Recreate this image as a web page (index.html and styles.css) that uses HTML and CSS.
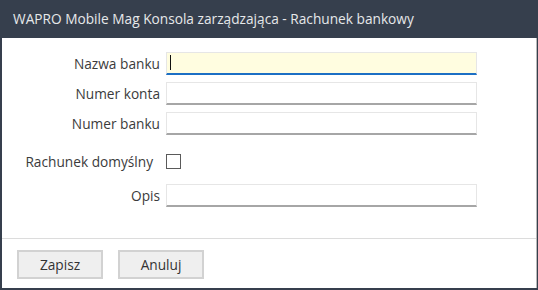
FILE: index.html
```html
<!DOCTYPE html>
<html lang="pl">
<head>
<meta charset="utf-8">
<title>Rachunek bankowy</title>
<link rel="stylesheet" href="styles.css">
</head>
<body>
<div class="window">
  <div class="titlebar">WAPRO Mobile Mag Konsola zarządzająca - Rachunek bankowy</div>
  <div class="content">
    <div class="form">
      <div class="row">
        <label class="label">Nazwa banku</label>
        <div class="field focused"><span class="caret"></span></div>
      </div>
      <div class="row">
        <label class="label">Numer konta</label>
        <div class="field"></div>
      </div>
      <div class="row">
        <label class="label">Numer banku</label>
        <div class="field"></div>
      </div>
      <div class="row row-check">
        <label class="label label-check">Rachunek domyślny</label>
        <div class="checkbox"></div>
      </div>
      <div class="row row-opis">
        <label class="label">Opis</label>
        <div class="field"></div>
      </div>
    </div>
    <div class="footer">
      <button class="btn">Zapisz</button>
      <button class="btn">Anuluj</button>
    </div>
  </div>
</div>
</body>
</html>
```
FILE: styles.css
```css
html, body {
  margin: 0;
  padding: 0;
  width: 538px;
  height: 290px;
  overflow: hidden;
  background: #363f4d;
  font-family: "Open Sans", "Noto Sans", sans-serif;
}
.window {
  display: flex;
  flex-direction: column;
  height: 290px;
}
.titlebar {
  height: 38px;
  line-height: 38px;
  padding-left: 13px;
  color: #e6e8ea;
  font-size: 13.7px;
  box-sizing: border-box;
  white-space: nowrap;
}
.content {
  margin: 0 1px 2px 2px;
  flex: 1;
  background: #fff;
  border-right: 1px solid #b9b9b9;
  display: flex;
  flex-direction: column;
}
.form {
  height: 201px;
  box-sizing: border-box;
  padding-top: 14px;
  display: flex;
  flex-direction: column;
  border-bottom: 1px solid #dcdcdc;
}
.row {
  display: grid;
  grid-template-columns: 158px 311px;
  column-gap: 6px;
  align-items: center;
  height: 23px;
  margin-bottom: 7px;
}
.label {
  text-align: right;
  font-size: 13.7px;
  color: #3b3b3b;
  white-space: nowrap;
}
.label-check {
  padding-right: 7px;
}
.field {
  height: 23px;
  box-sizing: border-box;
  border: 1px solid #e6e6e6;
  border-bottom: 2px solid #a6a6a6;
  background: #fff;
  position: relative;
}
.field.focused {
  background: #fffde0;
  border-bottom: 2px solid #1c6fc4;
}
.caret {
  position: absolute;
  left: 3px;
  top: 2px;
  width: 1px;
  height: 15px;
  background: #111;
}
.row-check {
  margin-top: 10px;
  height: 16px;
  margin-bottom: 16px;
}
.checkbox {
  width: 15px;
  height: 15px;
  box-sizing: border-box;
  border: 1px solid #5a5a5a;
  background: #fff;
}
.footer {
  flex: 1;
  display: flex;
  gap: 15px;
  padding: 11px 0 0 15px;
  box-sizing: border-box;
}
.btn {
  width: 86px;
  height: 29px;
  box-sizing: border-box;
  border: 2px solid #d2d2d2;
  background: #efefef;
  font-family: inherit;
  font-size: 13.7px;
  color: #333;
  padding: 0;
}
```
